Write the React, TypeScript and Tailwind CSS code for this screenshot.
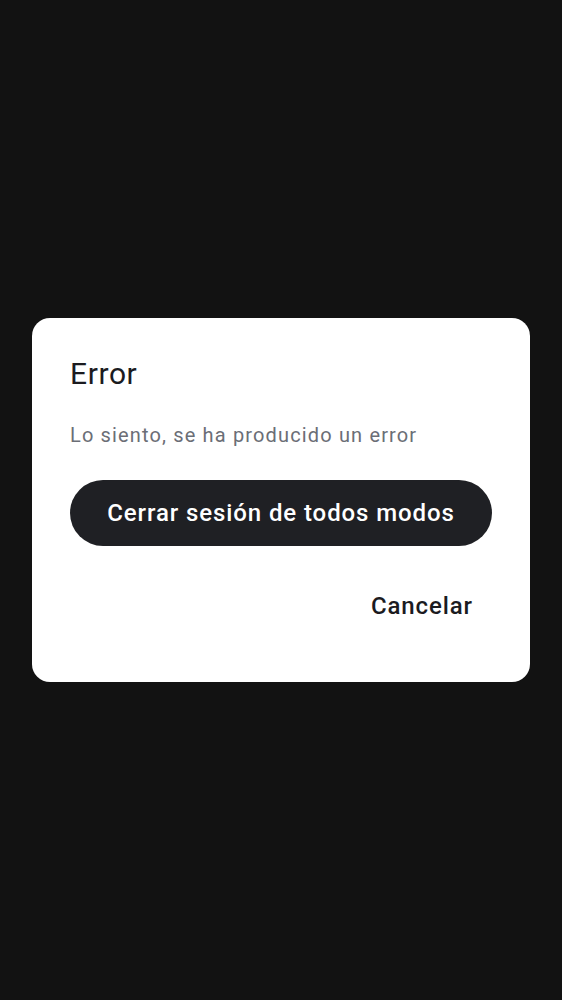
export default function App() {
  return (
    <div className="flex min-h-screen w-full items-center justify-center bg-[#121212] px-8 font-['Roboto',sans-serif]">
      <div className="w-full rounded-[18px] bg-white px-[38px] pt-[34px] pb-[49px]">
        <h2 className="text-[30px] leading-[44px] font-normal tracking-[0.6px] text-[#1b1b1f]">Error</h2>
        <p className="mt-[24px] text-[20px] leading-[30px] tracking-[1.15px] text-[#6b6e76]">
          Lo siento, se ha producido un error
        </p>
        <button className="mt-[30px] flex h-[66px] w-full items-center justify-center rounded-full bg-[#1f2024] text-[24px] font-medium tracking-[0.9px] text-white">
          Cerrar sesión de todos modos
        </button>
        <div className="mt-[33px] flex justify-end pr-[19px]">
          <button className="text-[24px] font-medium leading-[54px] tracking-[0.9px] text-[#1b1b1f]">Cancelar</button>
        </div>
      </div>
    </div>
  );
}
